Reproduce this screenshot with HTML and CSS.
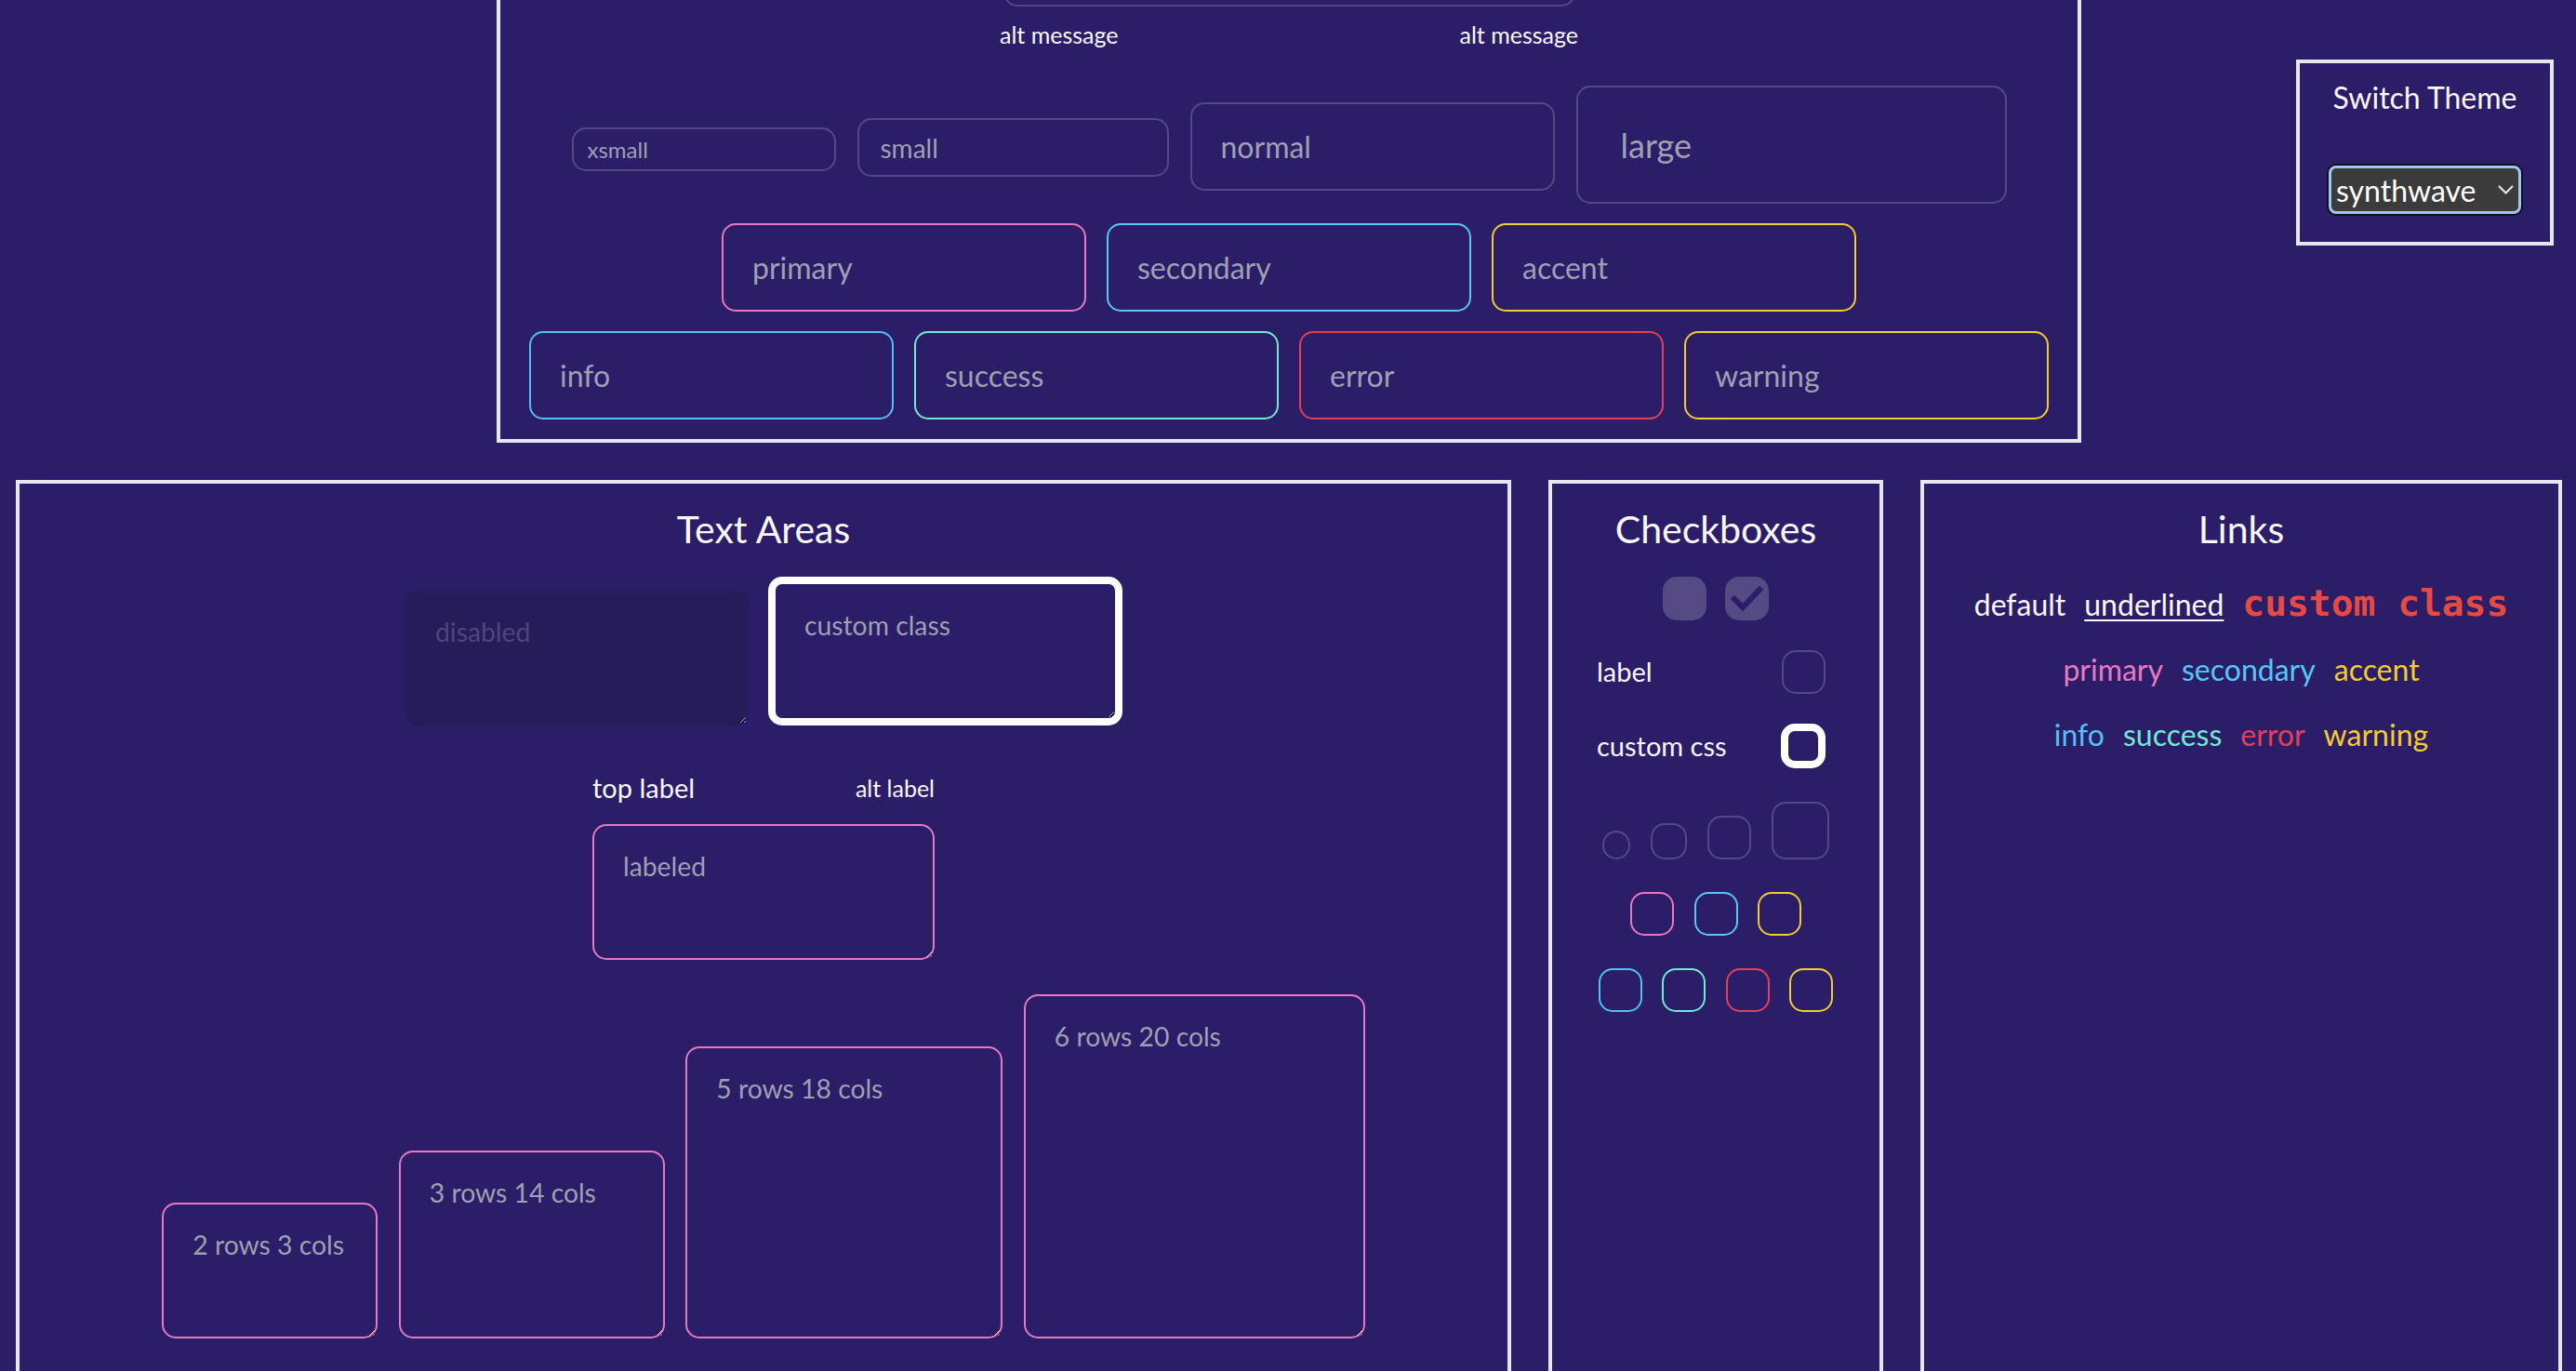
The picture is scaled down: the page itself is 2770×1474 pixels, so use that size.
FILE: index.html
```html
<!DOCTYPE html>
<html lang="en">
<head>
<meta charset="utf-8">
<title>Components</title>
<link rel="stylesheet" href="styles.css">
</head>
<body>
<div class="page">
  <section class="box inputs-box">
    <div class="form-control">
      <input class="input input-md input-labeled" placeholder="labeled">
      <div class="bottom-labels">
        <span class="label-alt">alt message</span>
        <span class="label-alt">alt message</span>
      </div>
    </div>
    <div class="input-row sizes">
      <input class="input input-xs" placeholder="xsmall">
      <input class="input input-sm" placeholder="small">
      <input class="input input-md" placeholder="normal">
      <input class="input input-lg" placeholder="large">
    </div>
    <div class="input-row colors">
      <input class="input input-md input-primary" placeholder="primary">
      <input class="input input-md input-secondary" placeholder="secondary">
      <input class="input input-md input-accent" placeholder="accent">
    </div>
    <div class="input-row colors">
      <input class="input input-md input-info" placeholder="info">
      <input class="input input-md input-success" placeholder="success">
      <input class="input input-md input-error" placeholder="error">
      <input class="input input-md input-warning" placeholder="warning">
    </div>
  </section>

  <div class="bottom-row">
    <section class="box ta-box">
      <h2 class="box-title">Text Areas</h2>
      <div class="ta-row first">
        <textarea class="textarea ta-disabled" rows="2" disabled placeholder="disabled"></textarea>
        <textarea class="textarea ta-custom" rows="2" placeholder="custom class"></textarea>
      </div>
      <div class="ta-form">
        <div class="ta-labels">
          <span class="label-text">top label</span>
          <span class="label-alt">alt label</span>
        </div>
        <textarea class="textarea textarea-primary ta-labeled" rows="2" placeholder="labeled"></textarea>
      </div>
      <div class="ta-row sizes">
        <textarea class="textarea textarea-primary ta-r2" rows="2" cols="3" placeholder="2 rows 3 cols"></textarea>
        <textarea class="textarea textarea-primary ta-r3" rows="3" cols="14" placeholder="3 rows 14 cols"></textarea>
        <textarea class="textarea textarea-primary ta-r5" rows="5" cols="18" placeholder="5 rows 18 cols"></textarea>
        <textarea class="textarea textarea-primary ta-r6" rows="6" cols="20" placeholder="6 rows 20 cols"></textarea>
      </div>
    </section>

    <section class="box cb-box">
      <h2 class="box-title">Checkboxes</h2>
      <div class="cb-row">
        <input type="checkbox" class="checkbox" disabled>
        <span class="cb-wrap">
          <input type="checkbox" class="checkbox" disabled checked>
          <svg class="check-mark" viewBox="0 0 47 47" aria-hidden="true"><polyline points="10,24 19,33 37,14" fill="none" stroke="#2b1d67" stroke-width="6" stroke-linecap="square" stroke-linejoin="miter"/></svg>
        </span>
      </div>
      <label class="cb-label-row first-label">
        <span class="label-text">label</span>
        <input type="checkbox" class="checkbox">
      </label>
      <label class="cb-label-row second-label">
        <span class="label-text">custom css</span>
        <input type="checkbox" class="checkbox checkbox-custom">
      </label>
      <div class="cb-sizes">
        <input type="checkbox" class="checkbox checkbox-xs">
        <input type="checkbox" class="checkbox checkbox-sm">
        <input type="checkbox" class="checkbox">
        <input type="checkbox" class="checkbox checkbox-lg">
      </div>
      <div class="cb-colors">
        <input type="checkbox" class="checkbox checkbox-primary">
        <input type="checkbox" class="checkbox checkbox-secondary">
        <input type="checkbox" class="checkbox checkbox-accent">
      </div>
      <div class="cb-colors">
        <input type="checkbox" class="checkbox checkbox-info">
        <input type="checkbox" class="checkbox checkbox-success">
        <input type="checkbox" class="checkbox checkbox-error">
        <input type="checkbox" class="checkbox checkbox-warning">
      </div>
    </section>

    <section class="box links-box">
      <h2 class="box-title">Links</h2>
      <div class="link-row row-1">
        <a class="link" href="#">default</a>
        <a class="link link-underlined" href="#">underlined</a>
        <a class="link link-custom" href="#">custom class</a>
      </div>
      <div class="link-row row-2">
        <a class="link link-primary" href="#">primary</a>
        <a class="link link-secondary" href="#">secondary</a>
        <a class="link link-accent" href="#">accent</a>
      </div>
      <div class="link-row row-3">
        <a class="link link-info" href="#">info</a>
        <a class="link link-success" href="#">success</a>
        <a class="link link-error" href="#">error</a>
        <a class="link link-warning" href="#">warning</a>
      </div>
    </section>
  </div>
</div>

<aside class="theme-box">
  <h3 class="theme-title">Switch Theme</h3>
  <div class="select-wrap">
    <select class="theme-select">
      <option>synthwave</option>
      <option>light</option>
      <option>dark</option>
    </select>
    <svg class="chev" viewBox="0 0 17 10" aria-hidden="true"><polyline points="1,1 8.5,8.5 16,1" fill="none" stroke="#e8e8e8" stroke-width="2"/></svg>
  </div>
</aside>
</body>
</html>
```

FILE: styles.css
```css
* { box-sizing: border-box; }

html, body {
  margin: 0;
  background: #2b1d67;
}

body {
  color: #f9f7fd;
  font-family: Lato, "Noto Sans", sans-serif;
}

.page {
  margin-top: -112px;
  padding: 0 15px 0 17px;
  display: flex;
  flex-direction: column;
  gap: 40px;
}

.box {
  border: 4px solid #e5e7eb;
}

/* ---------- Inputs ---------- */
.inputs-box {
  width: 1704px;
  align-self: center;
  display: flex;
  flex-direction: column;
  align-items: center;
  padding: 20px 0 21px;
}

.form-control {
  display: flex;
  flex-direction: column;
  align-items: center;
}

.bottom-labels {
  width: 622px;
  display: flex;
  justify-content: space-between;
  padding: 15px 0;
}

.label-alt {
  font-size: 25px;
  line-height: 31px;
}

.label-text {
  font-size: 29px;
}

.input {
  display: block;
  margin: 0;
  border: 2px solid #564786;
  border-radius: 15px;
  background: transparent;
  color: #f9f7fd;
  font-family: inherit;
  outline: none;
  flex: none;
}

.input::placeholder,
.textarea::placeholder {
  color: #9ea0b3;
  opacity: 1;
}

.input-xs { width: 284px; height: 47px; padding: 0 15px; font-size: 24px; }
.input-sm { width: 335px; height: 63px; padding: 0 23px; font-size: 28px; }
.input-md { width: 392px; height: 95px; padding: 0 31px; font-size: 32px; }
.input-lg { width: 463px; height: 127px; padding: 0 46px; font-size: 36px; }
.input-labeled { width: 615px; }

.input-primary { border-color: #e779c1; }
.input-secondary { border-color: #58c7f3; }
.input-accent { border-color: #f3cc30; }
.input-info { border-color: #53c0f3; }
.input-success { border-color: #71ead2; }
.input-error { border-color: #e24056; }
.input-warning { border-color: #f3cc30; }

.input-row {
  display: flex;
  gap: 22px;
}

.input-row.sizes {
  gap: 23px;
  align-items: baseline;
  margin-top: 24px;
}

.input-row.colors {
  align-items: center;
  margin-top: 21px;
}

/* ---------- Bottom row ---------- */
.bottom-row {
  display: flex;
  gap: 40px;
  align-items: stretch;
}

.box-title {
  margin: 0;
  font-size: 41px;
  line-height: 48px;
  font-weight: 400;
  text-align: center;
  white-space: nowrap;
}

/* ---------- Text areas ---------- */
.ta-box {
  width: 1608px;
  flex: none;
  display: flex;
  flex-direction: column;
  align-items: center;
  padding: 24.5px 0 40px;
}

.textarea {
  display: block;
  margin: 0;
  font-family: inherit;
  font-size: 28.3px;
  line-height: 56px;
  padding: 15px 31px;
  border: 2px solid transparent;
  border-radius: 15px;
  background: #2b1d67;
  color: #f9f7fd;
  outline: none;
  resize: both;
  flex: none;
}

.textarea-primary { border-color: #e779c1; }

.ta-row {
  display: flex;
  align-items: flex-end;
}

.ta-row.first {
  gap: 21px;
  margin-top: 27.5px;
}

.ta-disabled {
  width: 370px;
  height: 146px;
  background: #251c59;
  border-color: #251c59;
}

.ta-disabled::placeholder {
  color: #4f4778;
}

.ta-custom {
  width: 381px;
  height: 160px;
  border: 8px solid #ffffff;
  padding: 16px 31px;
}

.ta-form {
  width: 368px;
  margin-top: 47px;
}

.ta-labels {
  display: flex;
  justify-content: space-between;
  align-items: center;
  height: 40px;
  line-height: 40px;
}

.ta-labeled {
  width: 368px;
  height: 146px;
  margin-top: 19px;
}

.ta-row.sizes {
  gap: 22.5px;
  margin-top: 37px;
}

.ta-r2 { width: 232px; height: 146px; }
.ta-r3 { width: 286px; height: 202px; }
.ta-r5 { width: 341px; height: 314px; }
.ta-r6 { width: 367px; height: 370px; }

/* ---------- Checkboxes ---------- */
.cb-box {
  width: 360px;
  flex: none;
  display: flex;
  flex-direction: column;
  padding: 24.5px 0 0;
}

.checkbox {
  -webkit-appearance: none;
  appearance: none;
  display: block;
  margin: 0;
  width: 47px;
  height: 47px;
  border: 2px solid #564786;
  border-radius: 15px;
  background: transparent;
  flex: none;
}

.checkbox:disabled {
  background: #554a84;
  border-color: #554a84;
}

.cb-row {
  display: flex;
  justify-content: center;
  gap: 20px;
  margin-top: 27.5px;
}

.cb-wrap {
  position: relative;
  display: block;
  width: 47px;
  height: 47px;
}

.check-mark {
  position: absolute;
  left: 0;
  top: 0;
  width: 47px;
  height: 47px;
}

.cb-label-row {
  display: flex;
  justify-content: space-between;
  align-items: center;
  height: 48px;
  padding: 0 58px 0 48px;
  line-height: 48px;
}

.first-label { margin-top: 31px; }
.second-label { margin-top: 32px; }

.checkbox-custom {
  width: 48px;
  height: 48px;
  border: 8px solid #ffffff;
  border-radius: 15px;
}

.cb-sizes {
  display: flex;
  justify-content: center;
  align-items: flex-end;
  gap: 22px;
  margin-top: 36px;
}

.checkbox-xs { width: 30px; height: 31px; }
.checkbox-sm { width: 39px; height: 39px; }
.checkbox-lg { width: 62px; height: 62px; }

.cb-colors {
  display: flex;
  justify-content: center;
  gap: 21.5px;
  margin-top: 35px;
}

.checkbox-primary { border-color: #e779c1; }
.checkbox-secondary { border-color: #58c7f3; }
.checkbox-accent { border-color: #f3cc30; }
.checkbox-info { border-color: #53c0f3; }
.checkbox-success { border-color: #71ead2; }
.checkbox-error { border-color: #e24056; }
.checkbox-warning { border-color: #f3cc30; }

/* ---------- Links ---------- */
.links-box {
  flex: 1;
  display: flex;
  flex-direction: column;
  align-items: center;
  padding: 24.5px 0 0;
}

.link-row {
  display: flex;
  align-items: baseline;
  justify-content: center;
  gap: 20px;
  font-size: 32px;
}

.row-1 { margin-top: 32px; }
.row-2 { margin-top: 29px; }
.row-3 { margin-top: 31px; }

.link {
  color: #f9f7fd;
  text-decoration: none;
  white-space: nowrap;
}

.link-underlined {
  text-decoration: underline;
  text-decoration-thickness: 2px;
  text-underline-offset: 4px;
}

.link-custom {
  font-family: "DejaVu Sans Mono", "Liberation Mono", monospace;
  font-weight: 700;
  font-size: 39.6px;
  color: #e64a45;
}

.link-primary { color: #e779c1; }
.link-secondary { color: #58c7f3; }
.link-accent { color: #f3cc30; }
.link-info { color: #53c0f3; }
.link-success { color: #71ead2; }
.link-error { color: #e24056; }
.link-warning { color: #f3cc30; }

/* ---------- Theme switcher (floats over the page) ---------- */
.theme-box {
  position: fixed;
  top: 64px;
  right: 24px;
  width: 277px;
  height: 200px;
  border: 4px solid #e5e7eb;
  background: #2b1d67;
  display: flex;
  flex-direction: column;
  align-items: center;
  padding-top: 17px;
}

.theme-title {
  margin: 0;
  font-size: 32px;
  line-height: 40px;
  font-weight: 400;
  white-space: nowrap;
}

.select-wrap {
  position: relative;
  width: 207px;
  height: 52px;
  margin-top: 53px;
}

.theme-select {
  -webkit-appearance: none;
  appearance: none;
  display: block;
  width: 100%;
  height: 100%;
  margin: 0;
  background: #3b3b3b;
  color: #ffffff;
  border: 3px solid #9fc5f8;
  border-radius: 8px;
  box-shadow: 0 0 0 2px #111111;
  font-family: Lato, "Noto Sans", sans-serif;
  font-size: 32px;
  padding: 0 0 0 5px;
  outline: none;
}

.chev {
  position: absolute;
  right: 8px;
  top: 21px;
  width: 17px;
  height: 10px;
}
```
